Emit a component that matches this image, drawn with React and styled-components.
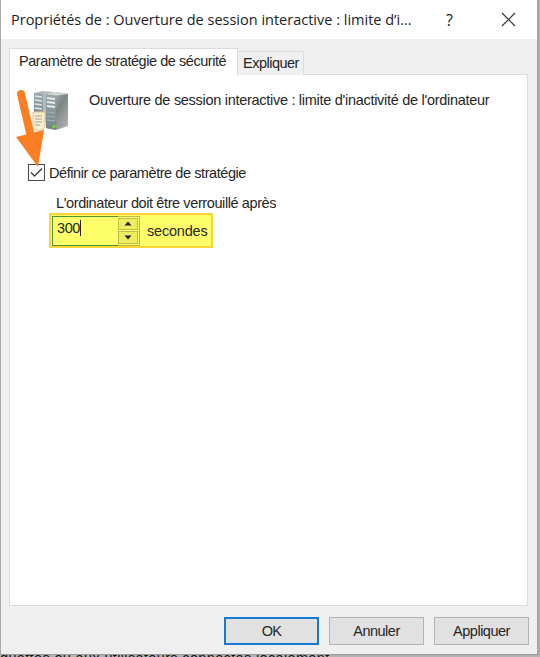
import React from "react";
import styled, { createGlobalStyle } from "styled-components";

const GlobalStyle = createGlobalStyle`
  * { box-sizing: border-box; }
  body { margin: 0; overflow: hidden; background: #b0b0b0; }
`;

const Desktop = styled.div`
  width: 540px;
  height: 657px;
  display: flex;
  flex-direction: column;
  overflow: hidden;
  background: #b2b2b2;
`;

const Dialog = styled.main`
  width: 539px;
  height: 655px;
  flex: none;
  display: flex;
  flex-direction: column;
  background: #efefef;
  border-left: 1px solid #a9a9a9;
  border-right: 2px solid #a6a6a6;
  border-bottom: 1px solid #9b9b9b;
`;

const TitleBar = styled.header`
  height: 39px;
  flex: none;
  display: flex;
  align-items: center;
  padding-left: 10px;
  background: #fff;
  color: #1c1c1c;
`;

const Title = styled.h1`
  width: 435px;
  flex: none;
  margin: 0;
  font: 400 14.5px/20px "Open Sans", sans-serif;
  letter-spacing: 0;
  white-space: nowrap;
`;

const TitleButton = styled.span`
  width: ${(p) => p.$width}px;
  height: 20px;
  flex: none;
  display: flex;
  align-items: center;
  font: 400 16px/20px "Open Sans", sans-serif;
`;

const Label = styled.span`
  font: 400 14.5px/18px "Liberation Sans", Arial, sans-serif;
  letter-spacing: ${(p) => p.$track || -0.45}px;
  color: #262626;
  white-space: nowrap;
`;

const TabStrip = styled.nav`
  height: 36px;
  flex: none;
  display: flex;
  align-items: flex-end;
  padding-left: 8px;
`;

const Tab = styled.div`
  width: ${(p) => (p.$active ? 229 : 66)}px;
  height: ${(p) => (p.$active ? 28 : 24)}px;
  margin-bottom: ${(p) => (p.$active ? -1 : 0)}px;
  padding: ${(p) => (p.$active ? "3px 0 0 9px" : "2px 0 0 5px")};
  background: ${(p) => (p.$active ? "#fff" : "#f0f0f0")};
  border: 1px solid #dcdcdc;
  border-bottom: 0;
  border-left-width: ${(p) => (p.$active ? 1 : 0)}px;
  z-index: ${(p) => (p.$active ? 1 : 0)};
  display: flex;
`;

const Panel = styled.section`
  width: 519px;
  height: 532px;
  flex: none;
  margin: -1px 0 0 8px;
  padding: 15px 0 0 20px;
  background: #fff;
  border: 1px solid #dcdcdc;
  display: flex;
  flex-direction: column;
`;

const Heading = styled.div`
  height: 74px;
  display: flex;
  align-items: flex-start;
`;

const HeadingText = styled.div`
  padding: 1px 0 0 19px;
  display: flex;
`;

const CheckRow = styled.label`
  height: 17px;
  display: flex;
  align-items: center;
  gap: 4px;
  margin-left: -2px;
`;

const CheckBox = styled.span`
  width: 17px;
  height: 17px;
  display: flex;
  border: 1px solid #4a4a4a;
  background: #fff;
`;

const Field = styled.div`
  padding: 13px 0 0 20px;
  display: flex;
  flex-direction: column;
  align-items: flex-start;
`;

const FieldLabel = styled.div`
  height: 19px;
  padding-left: 6px;
  display: flex;
`;

const Highlight = styled.div`
  width: 164px;
  height: 35px;
  margin-left: -1px;
  padding: 1px;
  display: flex;
  align-items: center;
  background: #ffff69;
  border: 2px solid #fbd436;
`;

const SpinBox = styled.div`
  width: 88px;
  height: 30px;
  display: flex;
  border: 1px solid #b9b744;
`;

const SpinValue = styled.div`
  width: 66px;
  height: 30px;
  margin: -1px 0 0 -1px;
  padding: 2px 0 0 4px;
  display: flex;
  border: 1px solid #4b9635;
  border-right: 0;
`;

const Caret = styled.span`
  width: 1px;
  height: 16px;
  margin-top: 1px;
  background: #222;
`;

const SpinButtons = styled.div`
  width: 21px;
  padding: 1px 1px 1px 0;
  display: flex;
  flex-direction: column;
  gap: 1px;
`;

const SpinButton = styled.span`
  flex: 1;
  display: flex;
  align-items: center;
  justify-content: center;
  background: #eeed60;
  border: 1px solid #bdbb49;
`;

const Unit = styled.div`
  padding: 1px 0 0 7px;
  display: flex;
`;

const Footer = styled.footer`
  display: flex;
  gap: 10px;
  padding: 11px 0 0 223px;
`;

const Button = styled.button`
  width: 95px;
  height: 28px;
  padding: 0;
  display: flex;
  align-items: center;
  justify-content: center;
  background: #e1e1e1;
  border: ${(p) => (p.$primary ? "2px solid #1479d3" : "1px solid #b3b3b3")};
`;

const Behind = styled.div`
  height: 2px;
  overflow: hidden;
  font: 400 14.5px/18px "Liberation Sans", Arial, sans-serif;
  letter-spacing: 0.35px;
  white-space: nowrap;
  color: #111;
`;

const BehindText = styled.div`
  margin-top: -6px;
`;

const Arrow = styled.svg`
  position: absolute;
  left: 14px;
  top: 87px;
`;

function ServerIcon() {
  return (
    <svg width="40" height="42" viewBox="0 0 40 42">
      <defs>
        <linearGradient id="side" x1="0" x2="1" y1="0" y2="1">
          <stop offset="0" stopColor="#c3c9c9" />
          <stop offset="0.5" stopColor="#7e8685" />
          <stop offset="1" stopColor="#b3b9b8" />
        </linearGradient>
        <linearGradient id="front" x1="0" x2="0" y1="0" y2="1">
          <stop offset="0" stopColor="#9aa7aa" />
          <stop offset="1" stopColor="#74848a" />
        </linearGradient>
      </defs>
      <path d="M4 3 12 1 24 2 17 5V33L4 31Z" fill="#b3bbbb" />
      <path d="M4 3 13 4V32L4 31Z" fill="url(#front)" />
      <path d="M5 6 12 7M5 10 12 11M5 14 12 15M5 18 12 19" stroke="#e0e7e8" strokeWidth="1.600" />
      <path d="M16 4 26 2 38 4V36L26 40 16 38Z" fill="url(#side)" />
      <path d="M16 4 26 5V40L16 38Z" fill="url(#front)" />
      <path d="M16 4 25 2 38 4 26 5.500Z" fill="#d2d7d7" />
      <path d="M17 8 25 9M17 12 25 13M17 16 25 17" stroke="#e6ecec" strokeWidth="2" />
      <path d="M17 22 25 23M17 26 25 27M17 30 25 31" stroke="#a4b3b7" />
      <circle cx="24" cy="36.500" r="1.700" fill="#6fd42c" />
      <path d="M3 22H15V37L13 40H3Z" fill="#f7edd0" stroke="#dfc58a" />
      <path d="M5 26H12M5 29H12M5 32H12M5 35H10" stroke="#a9a492" />
    </svg>
  );
}

export default function App() {
  return (
    <>
      <GlobalStyle />
      <Desktop>
        <Dialog>
          <TitleBar>
            <Title>Propriétés de : Ouverture de session interactive : limite d’i...</Title>
            <TitleButton $width={55}>?</TitleButton>
            <TitleButton $width={16}>
              <svg width="15" height="15" viewBox="0 0 15 15">
                <path d="M1 1 14 14M14 1 1 14" stroke="#333" strokeWidth="1.2" />
              </svg>
            </TitleButton>
          </TitleBar>
          <TabStrip>
            <Tab $active><Label>Paramètre de stratégie de sécurité</Label></Tab>
            <Tab><Label $track={-0.5}>Expliquer</Label></Tab>
          </TabStrip>
          <Panel>
            <Heading>
              <ServerIcon />
              <HeadingText>
                <Label $track={-0.29}>
                  Ouverture de session interactive : limite d'inactivité de l'ordinateur
                </Label>
              </HeadingText>
            </Heading>
            <CheckRow>
              <CheckBox>
                <svg width="15" height="15" viewBox="0 0 15 15">
                  <path d="M2 7.500 5.500 11 13 3.500" fill="none" stroke="#444" strokeWidth="1.500" />
                </svg>
              </CheckBox>
              <Label $track={-0.43}>Définir ce paramètre de stratégie</Label>
            </CheckRow>
            <Field>
              <FieldLabel>
                <Label $track={-0.4}>L'ordinateur doit être verrouillé après</Label>
              </FieldLabel>
              <Highlight>
                <SpinBox>
                  <SpinValue>
                    <Label $track={-0.4}>300</Label>
                    <Caret />
                  </SpinValue>
                  <SpinButtons>
                    <SpinButton>
                      <svg width="8" height="5" viewBox="0 0 8 5"><path d="M4 .5 7.500 4.500H.5Z" fill="#222" /></svg>
                    </SpinButton>
                    <SpinButton>
                      <svg width="8" height="5" viewBox="0 0 8 5"><path d="M4 4.500 7.500 .5H.5Z" fill="#222" /></svg>
                    </SpinButton>
                  </SpinButtons>
                </SpinBox>
                <Unit><Label $track={-0.2}>secondes</Label></Unit>
              </Highlight>
            </Field>
          </Panel>
          <Footer>
            <Button $primary><Label $track={-0.6}>OK</Label></Button>
            <Button><Label $track={-0.5}>Annuler</Label></Button>
            <Button><Label $track={-0.5}>Appliquer</Label></Button>
          </Footer>
        </Dialog>
        <Behind>
          <BehindText>quettes ou aux utilisateurs connectés localement.</BehindText>
        </Behind>
      </Desktop>
      <Arrow width="34" height="82" viewBox="0 0 34 82">
        <path d="M7 7 17 50" stroke="#fb7d24" strokeWidth="8" strokeLinecap="round" />
        <path d="M2 50 30 43 24 80Z" fill="#fb7d24" />
      </Arrow>
    </>
  );
}
